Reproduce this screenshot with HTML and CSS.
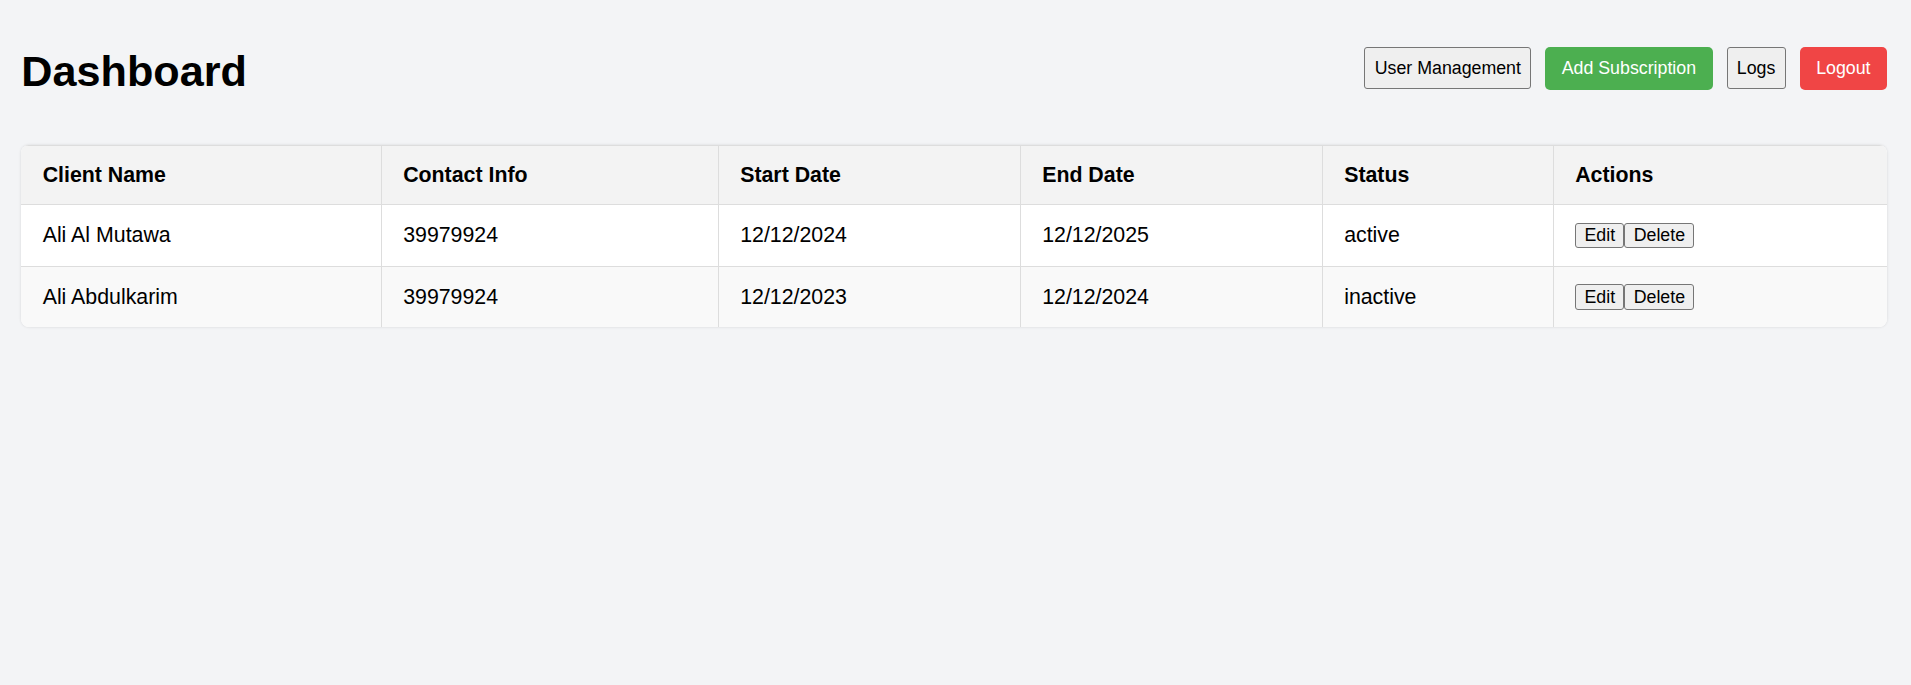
FILE: index.html
```html
<!DOCTYPE html>
<html lang="en">
<head>
<meta charset="utf-8">
<title>Dashboard</title>
<link rel="stylesheet" href="styles.css">
</head>
<body>
<div class="page">
  <header class="topbar">
    <h1 class="title">Dashboard</h1>
    <nav class="actions">
      <button class="btn btn-plain">User Management</button>
      <button class="btn btn-green">Add Subscription</button>
      <button class="btn btn-plain">Logs</button>
      <button class="btn btn-red">Logout</button>
    </nav>
  </header>
  <div class="table-wrap">
    <table class="subs">
      <colgroup>
        <col class="w-name">
        <col class="w-contact">
        <col class="w-start">
        <col class="w-end">
        <col class="w-status">
        <col class="w-actions">
      </colgroup>
      <thead>
        <tr>
          <th>Client Name</th>
          <th>Contact Info</th>
          <th>Start Date</th>
          <th>End Date</th>
          <th>Status</th>
          <th>Actions</th>
        </tr>
      </thead>
      <tbody>
        <tr>
          <td>Ali Al Mutawa</td>
          <td>39979924</td>
          <td>12/12/2024</td>
          <td>12/12/2025</td>
          <td>active</td>
          <td><div class="row-actions"><button class="mini">Edit</button><button class="mini">Delete</button></div></td>
        </tr>
        <tr>
          <td>Ali Abdulkarim</td>
          <td>39979924</td>
          <td>12/12/2023</td>
          <td>12/12/2024</td>
          <td>inactive</td>
          <td><div class="row-actions"><button class="mini">Edit</button><button class="mini">Delete</button></div></td>
        </tr>
      </tbody>
    </table>
  </div>
</div>
</body>
</html>
```
FILE: styles.css
```css
html, body {
  margin: 0;
  background: #f3f4f6;
}

body {
  font-family: "Liberation Sans", Arial, sans-serif;
  font-size: 21.33px;
  color: #000;
}

.page {
  padding: 21.33px 24px 21.33px 21.33px;
}

.topbar {
  display: flex;
  justify-content: space-between;
  align-items: flex-start;
  margin-bottom: 20.7px;
}

.title {
  font-size: 43.2px;
  font-weight: bold;
  line-height: 47.7px;
  margin: 26.2px 0 28.6px;
}

.actions {
  display: flex;
  align-items: center;
  gap: 14px;
  margin-top: 25.4px;
}

.btn {
  font-family: "Liberation Sans", Arial, sans-serif;
  font-size: 17.78px;
  line-height: 20.4px;
  margin: 0;
  cursor: pointer;
}

.btn-plain {
  background: #efefef;
  color: #000;
  border: 1px solid #767676;
  border-radius: 3px;
  padding: 9.8px 9.3px;
}

.btn-green,
.btn-red {
  color: #fff;
  border: none;
  border-radius: 5px;
  padding: 11.3px 16.5px;
}

.btn-green {
  background: #4caf50;
}

.btn-red {
  background: #f04545;
}

.table-wrap {
  background: #fff;
  border-radius: 8px;
  overflow: hidden;
  box-shadow: 0 0 3px rgba(0, 0, 0, 0.12);
}

.subs {
  width: 100%;
  border-collapse: collapse;
  table-layout: fixed;
}

.w-name { width: 360px; }
.w-contact { width: 337px; }
.w-start { width: 302px; }
.w-end { width: 302px; }
.w-status { width: 231px; }
.w-actions { width: 334px; }

.subs th,
.subs td {
  text-align: left;
  padding: 17.8px 21.33px;
  line-height: 24.5px;
  border: 1px solid #dddddd;
}

.subs th {
  padding: 17px 21.33px;
  background: #f3f3f3;
  font-weight: bold;
}

.subs tr > :first-child { border-left: none; }
.subs tr > :last-child { border-right: none; }

.subs tbody tr:nth-child(even) td {
  background: #f9f9f9;
}

.subs tbody tr:last-child td {
  border-bottom: none;
}

.row-actions {
  display: flex;
}

.mini {
  font-family: "Liberation Sans", Arial, sans-serif;
  font-size: 17.78px;
  line-height: 20.4px;
  margin: 0;
  padding: 1.33px 8.3px;
  background: #efefef;
  color: #000;
  border: 1.33px solid #767676;
  border-radius: 3px;
}
```
